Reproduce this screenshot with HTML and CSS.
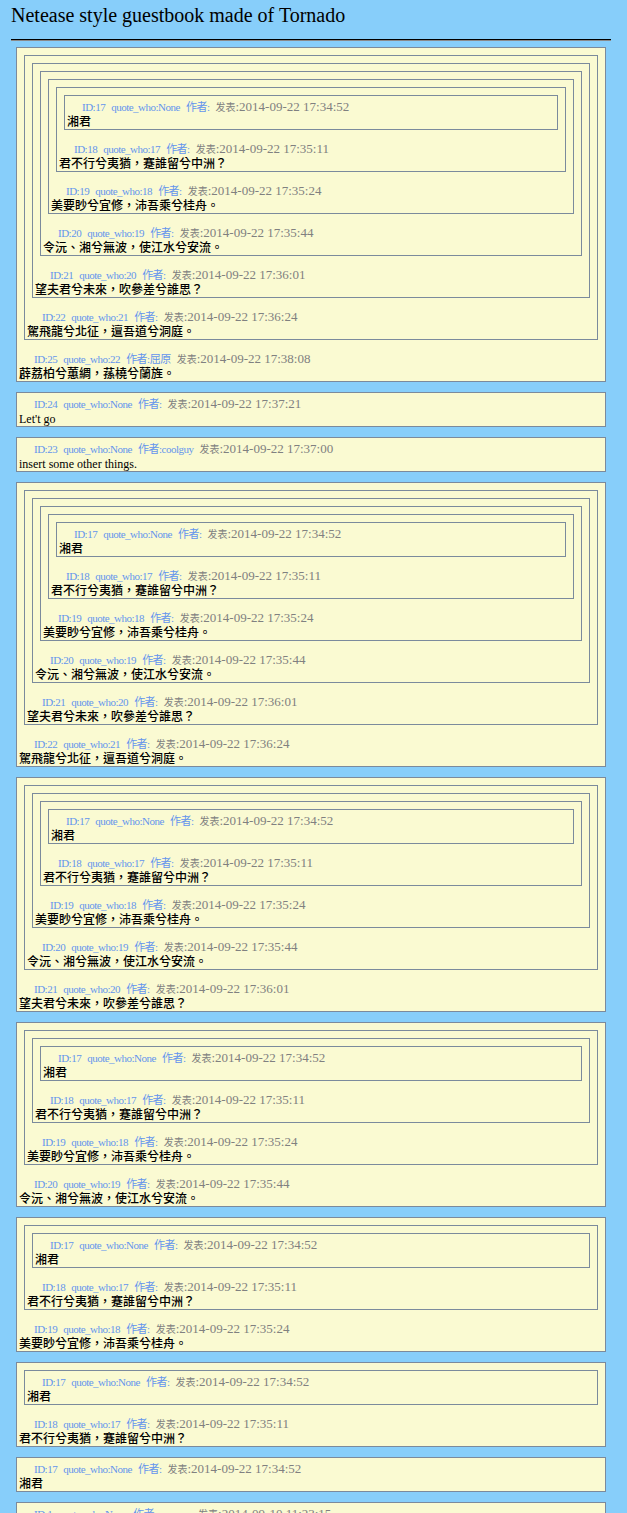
FILE: index.html
```html
<!DOCTYPE html>
<html lang="zh-Hant">
<head>
<meta charset="utf-8">
<title>Netease style guestbook made of Tornado</title>
<link rel="stylesheet" href="styles.css">
</head>
<body>
<div class="page">
<h1 class="title">Netease style guestbook made of Tornado</h1>
<hr class="rule">
<div class="list">

<div class="msg">
 <div class="msg">
  <div class="msg">
   <div class="msg">
    <div class="msg">
     <div class="msg">
      <div class="msg">
       <div class="hd"><span class="meta">ID:17</span><span class="meta">quote_who:None</span><span class="meta">作者:</span><span class="time"><span class="lbl">发表</span>:2014-09-22 17:34:52</span></div>
       <div class="bd">湘君</div>
      </div>
      <div class="hd"><span class="meta">ID:18</span><span class="meta">quote_who:17</span><span class="meta">作者:</span><span class="time"><span class="lbl">发表</span>:2014-09-22 17:35:11</span></div>
      <div class="bd">君不行兮夷猶，蹇誰留兮中洲？</div>
     </div>
     <div class="hd"><span class="meta">ID:19</span><span class="meta">quote_who:18</span><span class="meta">作者:</span><span class="time"><span class="lbl">发表</span>:2014-09-22 17:35:24</span></div>
     <div class="bd">美要眇兮宜修，沛吾乘兮桂舟。</div>
    </div>
    <div class="hd"><span class="meta">ID:20</span><span class="meta">quote_who:19</span><span class="meta">作者:</span><span class="time"><span class="lbl">发表</span>:2014-09-22 17:35:44</span></div>
    <div class="bd">令沅、湘兮無波，使江水兮安流。</div>
   </div>
   <div class="hd"><span class="meta">ID:21</span><span class="meta">quote_who:20</span><span class="meta">作者:</span><span class="time"><span class="lbl">发表</span>:2014-09-22 17:36:01</span></div>
   <div class="bd">望夫君兮未來，吹參差兮誰思？</div>
  </div>
  <div class="hd"><span class="meta">ID:22</span><span class="meta">quote_who:21</span><span class="meta">作者:</span><span class="time"><span class="lbl">发表</span>:2014-09-22 17:36:24</span></div>
  <div class="bd">駕飛龍兮北征，邅吾道兮洞庭。</div>
 </div>
 <div class="hd"><span class="meta">ID:25</span><span class="meta">quote_who:22</span><span class="meta">作者:屈原</span><span class="time"><span class="lbl">发表</span>:2014-09-22 17:38:08</span></div>
 <div class="bd">薜荔柏兮蕙綢，蓀橈兮蘭旌。</div>
</div>

<div class="msg">
 <div class="hd"><span class="meta">ID:24</span><span class="meta">quote_who:None</span><span class="meta">作者:</span><span class="time"><span class="lbl">发表</span>:2014-09-22 17:37:21</span></div>
 <div class="bd">Let't go</div>
</div>

<div class="msg">
 <div class="hd"><span class="meta">ID:23</span><span class="meta">quote_who:None</span><span class="meta">作者:coolguy</span><span class="time"><span class="lbl">发表</span>:2014-09-22 17:37:00</span></div>
 <div class="bd">insert some other things.</div>
</div>

<div class="msg">
 <div class="msg">
  <div class="msg">
   <div class="msg">
    <div class="msg">
     <div class="msg">
      <div class="hd"><span class="meta">ID:17</span><span class="meta">quote_who:None</span><span class="meta">作者:</span><span class="time"><span class="lbl">发表</span>:2014-09-22 17:34:52</span></div>
      <div class="bd">湘君</div>
     </div>
     <div class="hd"><span class="meta">ID:18</span><span class="meta">quote_who:17</span><span class="meta">作者:</span><span class="time"><span class="lbl">发表</span>:2014-09-22 17:35:11</span></div>
     <div class="bd">君不行兮夷猶，蹇誰留兮中洲？</div>
    </div>
    <div class="hd"><span class="meta">ID:19</span><span class="meta">quote_who:18</span><span class="meta">作者:</span><span class="time"><span class="lbl">发表</span>:2014-09-22 17:35:24</span></div>
    <div class="bd">美要眇兮宜修，沛吾乘兮桂舟。</div>
   </div>
   <div class="hd"><span class="meta">ID:20</span><span class="meta">quote_who:19</span><span class="meta">作者:</span><span class="time"><span class="lbl">发表</span>:2014-09-22 17:35:44</span></div>
   <div class="bd">令沅、湘兮無波，使江水兮安流。</div>
  </div>
  <div class="hd"><span class="meta">ID:21</span><span class="meta">quote_who:20</span><span class="meta">作者:</span><span class="time"><span class="lbl">发表</span>:2014-09-22 17:36:01</span></div>
  <div class="bd">望夫君兮未來，吹參差兮誰思？</div>
 </div>
 <div class="hd"><span class="meta">ID:22</span><span class="meta">quote_who:21</span><span class="meta">作者:</span><span class="time"><span class="lbl">发表</span>:2014-09-22 17:36:24</span></div>
 <div class="bd">駕飛龍兮北征，邅吾道兮洞庭。</div>
</div>

<div class="msg">
 <div class="msg">
  <div class="msg">
   <div class="msg">
    <div class="msg">
     <div class="hd"><span class="meta">ID:17</span><span class="meta">quote_who:None</span><span class="meta">作者:</span><span class="time"><span class="lbl">发表</span>:2014-09-22 17:34:52</span></div>
     <div class="bd">湘君</div>
    </div>
    <div class="hd"><span class="meta">ID:18</span><span class="meta">quote_who:17</span><span class="meta">作者:</span><span class="time"><span class="lbl">发表</span>:2014-09-22 17:35:11</span></div>
    <div class="bd">君不行兮夷猶，蹇誰留兮中洲？</div>
   </div>
   <div class="hd"><span class="meta">ID:19</span><span class="meta">quote_who:18</span><span class="meta">作者:</span><span class="time"><span class="lbl">发表</span>:2014-09-22 17:35:24</span></div>
   <div class="bd">美要眇兮宜修，沛吾乘兮桂舟。</div>
  </div>
  <div class="hd"><span class="meta">ID:20</span><span class="meta">quote_who:19</span><span class="meta">作者:</span><span class="time"><span class="lbl">发表</span>:2014-09-22 17:35:44</span></div>
  <div class="bd">令沅、湘兮無波，使江水兮安流。</div>
 </div>
 <div class="hd"><span class="meta">ID:21</span><span class="meta">quote_who:20</span><span class="meta">作者:</span><span class="time"><span class="lbl">发表</span>:2014-09-22 17:36:01</span></div>
 <div class="bd">望夫君兮未來，吹參差兮誰思？</div>
</div>

<div class="msg">
 <div class="msg">
  <div class="msg">
   <div class="msg">
    <div class="hd"><span class="meta">ID:17</span><span class="meta">quote_who:None</span><span class="meta">作者:</span><span class="time"><span class="lbl">发表</span>:2014-09-22 17:34:52</span></div>
    <div class="bd">湘君</div>
   </div>
   <div class="hd"><span class="meta">ID:18</span><span class="meta">quote_who:17</span><span class="meta">作者:</span><span class="time"><span class="lbl">发表</span>:2014-09-22 17:35:11</span></div>
   <div class="bd">君不行兮夷猶，蹇誰留兮中洲？</div>
  </div>
  <div class="hd"><span class="meta">ID:19</span><span class="meta">quote_who:18</span><span class="meta">作者:</span><span class="time"><span class="lbl">发表</span>:2014-09-22 17:35:24</span></div>
  <div class="bd">美要眇兮宜修，沛吾乘兮桂舟。</div>
 </div>
 <div class="hd"><span class="meta">ID:20</span><span class="meta">quote_who:19</span><span class="meta">作者:</span><span class="time"><span class="lbl">发表</span>:2014-09-22 17:35:44</span></div>
 <div class="bd">令沅、湘兮無波，使江水兮安流。</div>
</div>

<div class="msg">
 <div class="msg">
  <div class="msg">
   <div class="hd"><span class="meta">ID:17</span><span class="meta">quote_who:None</span><span class="meta">作者:</span><span class="time"><span class="lbl">发表</span>:2014-09-22 17:34:52</span></div>
   <div class="bd">湘君</div>
  </div>
  <div class="hd"><span class="meta">ID:18</span><span class="meta">quote_who:17</span><span class="meta">作者:</span><span class="time"><span class="lbl">发表</span>:2014-09-22 17:35:11</span></div>
  <div class="bd">君不行兮夷猶，蹇誰留兮中洲？</div>
 </div>
 <div class="hd"><span class="meta">ID:19</span><span class="meta">quote_who:18</span><span class="meta">作者:</span><span class="time"><span class="lbl">发表</span>:2014-09-22 17:35:24</span></div>
 <div class="bd">美要眇兮宜修，沛吾乘兮桂舟。</div>
</div>

<div class="msg">
 <div class="msg">
  <div class="hd"><span class="meta">ID:17</span><span class="meta">quote_who:None</span><span class="meta">作者:</span><span class="time"><span class="lbl">发表</span>:2014-09-22 17:34:52</span></div>
  <div class="bd">湘君</div>
 </div>
 <div class="hd"><span class="meta">ID:18</span><span class="meta">quote_who:17</span><span class="meta">作者:</span><span class="time"><span class="lbl">发表</span>:2014-09-22 17:35:11</span></div>
 <div class="bd">君不行兮夷猶，蹇誰留兮中洲？</div>
</div>

<div class="msg">
 <div class="hd"><span class="meta">ID:17</span><span class="meta">quote_who:None</span><span class="meta">作者:</span><span class="time"><span class="lbl">发表</span>:2014-09-22 17:34:52</span></div>
 <div class="bd">湘君</div>
</div>

<div class="msg">
 <div class="hd"><span class="meta">ID:1</span><span class="meta">quote_who:None</span><span class="meta">作者:someone</span><span class="time"><span class="lbl">发表</span>:2014-09-10 11:23:15</span></div>
 <div class="bd">hello world</div>
</div>

</div>
</div>
</body>
</html>
```

FILE: styles.css
```css
html, body {
  margin: 0;
  padding: 0;
}

body {
  background: #87cefa;
  color: #000;
  font-family: "Liberation Serif", "Noto Sans CJK TC", serif;
}

.page {
  width: 600px;
  margin-left: 11px;
  padding-top: 4px;
}

.title {
  margin: 0;
  font-size: 20px;
  font-weight: normal;
  line-height: 23px;
}

.rule {
  margin: 12px 0 0;
  height: 0;
  border: 0;
  border-top: 1px solid #000;
  border-bottom: 1px solid #8a8a8a;
}

.list {
  padding: 6px 5px 0;
}

.msg {
  border: 1px solid #7b8a9c;
  background: #fafad2;
  padding: 2px 2px 0;
  margin-bottom: 10px;
}

.msg .msg {
  margin: 5px 5px 10px;
}

.hd {
  padding-left: 15px;
  font-size: 13px;
  line-height: 17px;
  color: #808080;
  white-space: nowrap;
}

.meta {
  font-size: 11px;
  line-height: 1;
  letter-spacing: -0.5px;
  color: #6495ed;
  margin-right: 6px;
}

.lbl {
  font-size: 10px;
  line-height: 1;
}

.bd {
  font-size: 12px;
  line-height: 14px;
  font-weight: 500;
}
```
